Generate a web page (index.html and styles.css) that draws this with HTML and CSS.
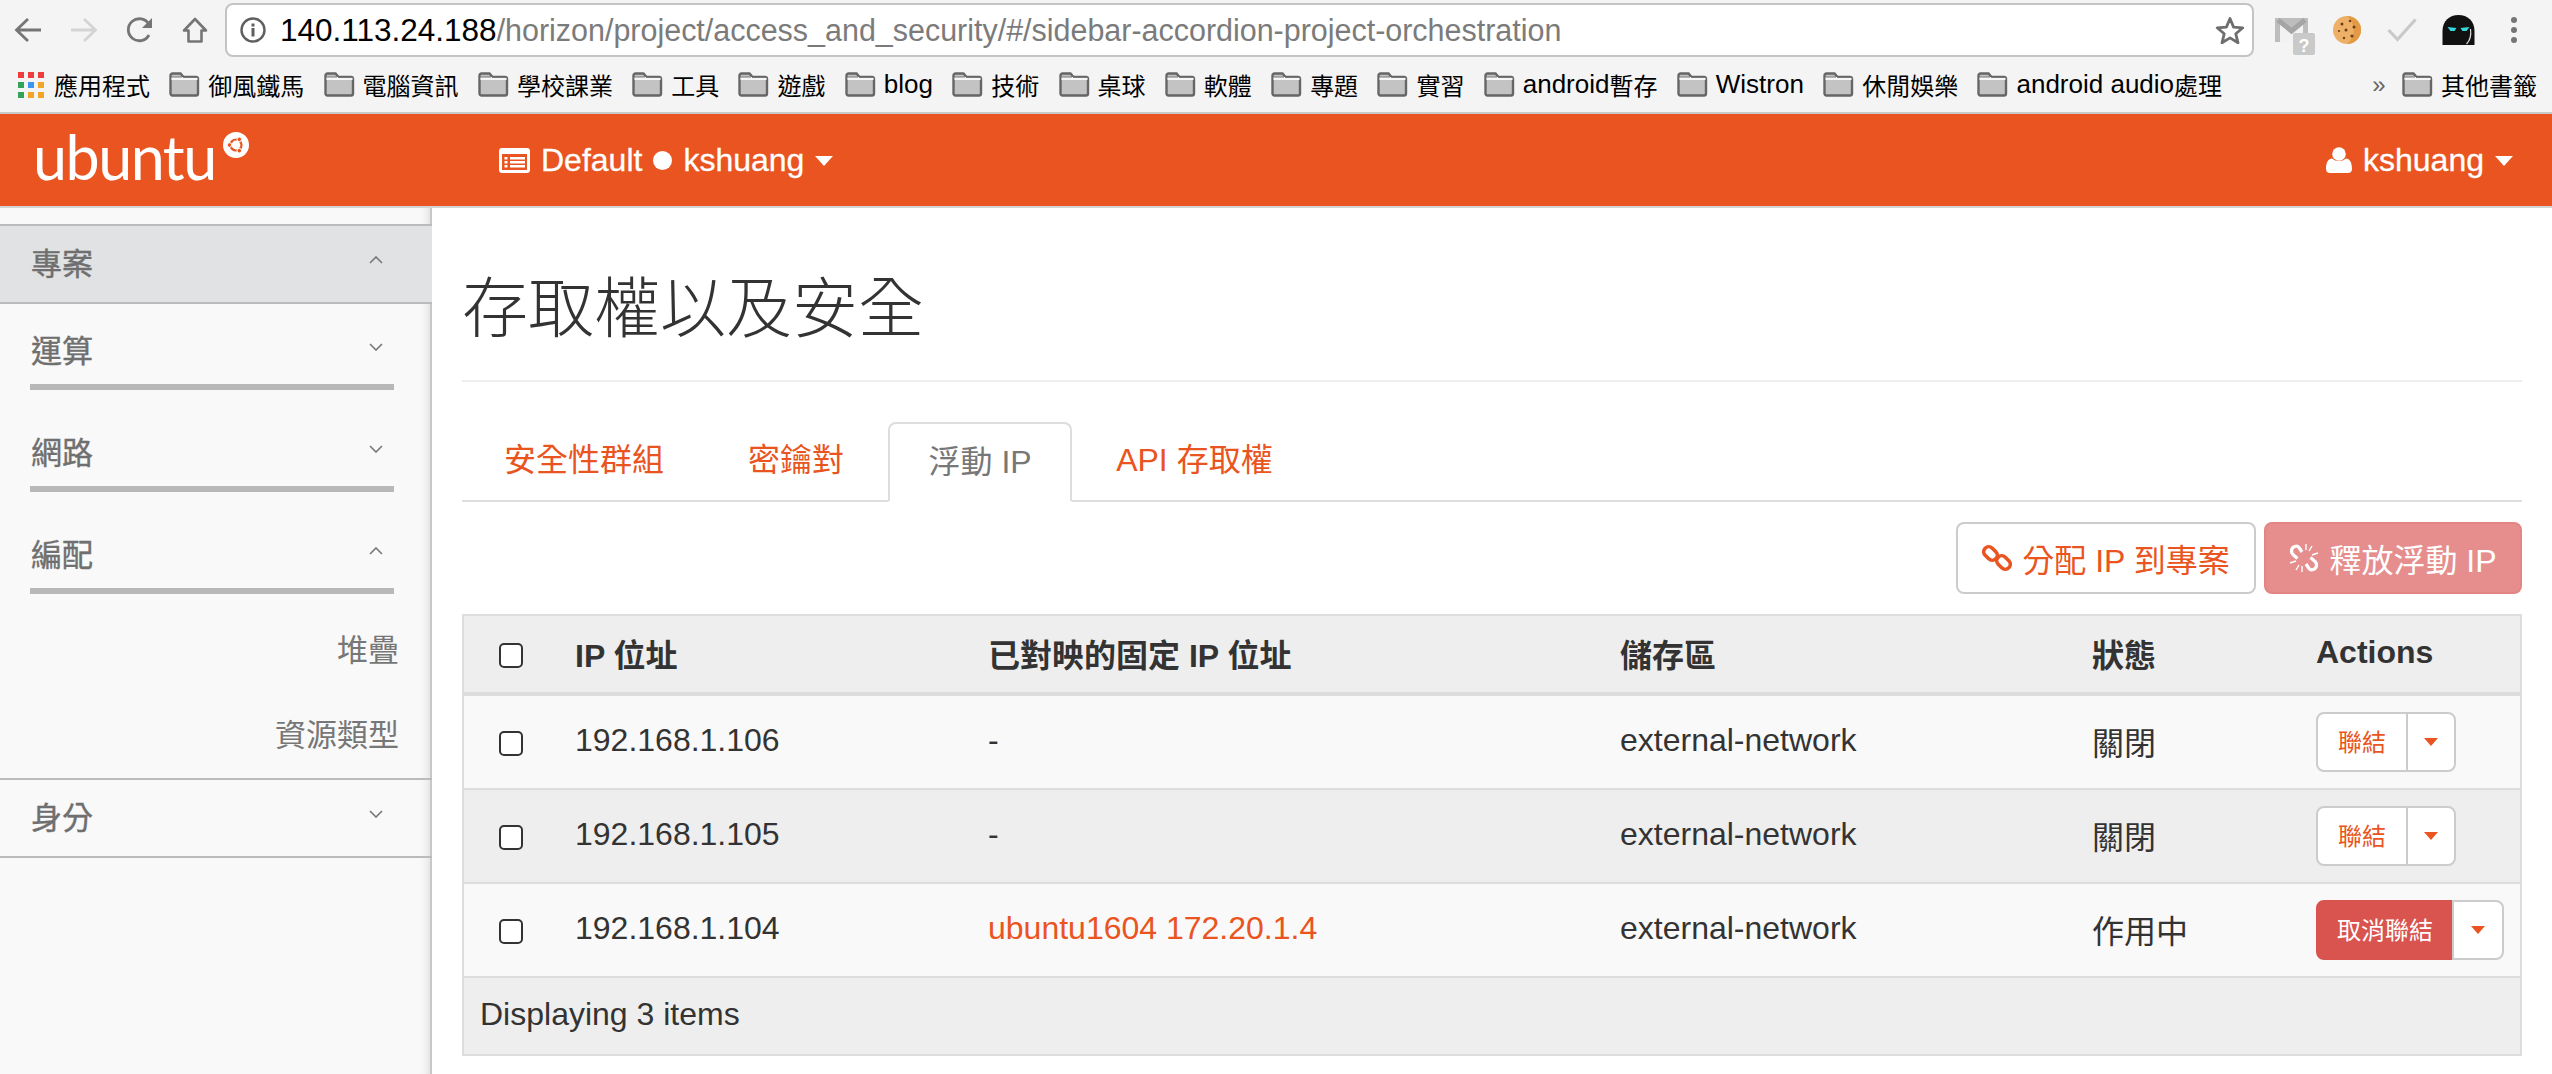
FILE: index.html
```html
<!DOCTYPE html>
<html lang="zh-Hant">
<head>
<meta charset="utf-8">
<title>存取權以及安全</title>
<link rel="stylesheet" href="styles.css">
</head>
<body>
<svg class="defs" width="0" height="0" aria-hidden="true">
  <symbol id="folder" viewBox="0 0 31 25">
    <path d="M1.5 3.5a2 2 0 0 1 2-2h8l3 3.5h12.500a2 2 0 0 1 2 2v14.500a2 2 0 0 1-2 2h-23.500a2 2 0 0 1-2-2z" fill="#c3c3c3" stroke="#666" stroke-width="2.400"/>
    <path d="M2.500 6.500h26" stroke="#f6f6f6" stroke-width="3"/>
    <path d="M2 5h11M14 5.500h15" stroke="#777" stroke-width="1.200" fill="none"/>
  </symbol>
  <symbol id="chev-down" viewBox="0 0 14 8"><path d="M1 1l6 6 6-6" fill="none" stroke="#777" stroke-width="1.600"/></symbol>
  <symbol id="chev-up" viewBox="0 0 14 8"><path d="M1 7l6-6 6 6" fill="none" stroke="#777" stroke-width="1.600"/></symbol>
</svg>

<header class="chrome">
  <div class="toolbar">
    <svg class="nav-icon" viewBox="0 0 28 26"><path d="M27 13H3M14 2L2.500 13 14 24" fill="none" stroke="#757575" stroke-width="2.800"/></svg>
    <svg class="nav-icon nav-gap" viewBox="0 0 28 26"><path d="M1 13h24M14 2l11.500 11L14 24" fill="none" stroke="#d4d4d4" stroke-width="2.800"/></svg>
    <svg class="nav-icon nav-gap" viewBox="0 0 28 26"><path d="M23 18a11 11 0 1 1 0-10.500" fill="none" stroke="#757575" stroke-width="2.800"/><path d="M26 1v10H16z" fill="#757575"/></svg>
    <svg class="nav-icon nav-gap home" viewBox="0 0 26 26"><path d="M13 2L2 13.500h4.500V24.500h13V13.500H24z" fill="none" stroke="#757575" stroke-width="2.600" stroke-linejoin="round"/></svg>
    <div class="omnibox">
      <svg class="info" viewBox="0 0 26 26"><circle cx="13" cy="13" r="11.500" fill="none" stroke="#5f5f5f" stroke-width="2.400"/><path d="M11.500 11h3v8.500h-3zM11.500 6.500h3v3h-3z" fill="#5f5f5f"/></svg>
      <div class="url"><span class="url-host">140.113.24.188</span>/horizon/project/access_and_security/#/sidebar-accordion-project-orchestration</div>
      <svg class="star" viewBox="0 0 30 28"><path d="M15 2.500l3.600 8.600 9.200.7-7 6 2.200 9-8-4.900-8 4.900 2.200-9-7-6 9.200-.7z" fill="none" stroke="#6e6e6e" stroke-width="2.800" stroke-linejoin="round"/></svg>
    </div>
    <div class="extensions">
      <svg class="ext-mail" viewBox="0 0 42 38">
        <path d="M0 0h33v24H0z" fill="#bdbdbd"/><path d="M5 5v19h23V5L16.500 15z" fill="#f2f2f2"/><path d="M3 2l13.500 11L30 2" fill="none" stroke="#a5a5a5" stroke-width="5"/>
        <path d="M18 17a2 2 0 0 1 2-2h18a2 2 0 0 1 2 2v18a2 2 0 0 1-2 2H20a2 2 0 0 1-2-2z" fill="#c9c9c9"/>
        <text class="ext-badge" x="29" y="34">?</text>
      </svg>
      <svg class="ext-cookie" viewBox="0 0 28 28"><circle cx="14" cy="14" r="14" fill="#eeb066"/><path d="M14 0a14 14 0 0 1 0 28 18 18 0 0 0 0-28z" fill="#e29a45"/><g fill="#6b3f18"><circle cx="9" cy="8" r="1.500"/><circle cx="17" cy="5" r="1.300"/><circle cx="21" cy="11" r="1.500"/><circle cx="13" cy="14" r="1.500"/><circle cx="6" cy="15" r="1.100"/><circle cx="19" cy="20" r="1.600"/><circle cx="11" cy="22" r="1.200"/></g></svg>
      <svg class="ext-check" viewBox="0 0 30 24"><path d="M1.500 12l9 9.500L28.500 1.500" fill="none" stroke="#c9c9c9" stroke-width="3.200"/></svg>
      <svg class="ext-ghost" viewBox="0 0 32 30"><path d="M0 30V16C0 6 7 0 16 0s16 6 16 16v14z" fill="#111"/><path d="M28 14c1 7 0 11-4 15" fill="none" stroke="#ddd" stroke-width="1.200"/><path d="M5 12l9 1-2 3H8zM27 12l-9 1 2 3h4z" fill="#35d8dd"/></svg>
      <svg class="ext-dots" viewBox="0 0 6 26"><g fill="#757575"><circle cx="3" cy="3" r="3"/><circle cx="3" cy="13" r="3"/><circle cx="3" cy="23" r="3"/></g></svg>
    </div>
  </div>
  <nav class="bookmarks">
    <a class="bm bm-apps">
      <span class="apps-grid">
        <i class="c-red"></i><i class="c-red"></i><i class="c-red"></i>
        <i class="c-green"></i><i class="c-blue"></i><i class="c-amber"></i>
        <i class="c-green"></i><i class="c-amber"></i><i class="c-amber"></i>
      </span>應用程式</a>
    <a class="bm"><svg class="folder"><use href="#folder"/></svg>御風鐵馬</a>
    <a class="bm"><svg class="folder"><use href="#folder"/></svg>電腦資訊</a>
    <a class="bm"><svg class="folder"><use href="#folder"/></svg>學校課業</a>
    <a class="bm"><svg class="folder"><use href="#folder"/></svg>工具</a>
    <a class="bm"><svg class="folder"><use href="#folder"/></svg>遊戲</a>
    <a class="bm"><svg class="folder"><use href="#folder"/></svg><span class="lat">blog</span></a>
    <a class="bm"><svg class="folder"><use href="#folder"/></svg>技術</a>
    <a class="bm"><svg class="folder"><use href="#folder"/></svg>桌球</a>
    <a class="bm"><svg class="folder"><use href="#folder"/></svg>軟體</a>
    <a class="bm"><svg class="folder"><use href="#folder"/></svg>專題</a>
    <a class="bm"><svg class="folder"><use href="#folder"/></svg>實習</a>
    <a class="bm"><svg class="folder"><use href="#folder"/></svg><span class="lat">android</span>暫存</a>
    <a class="bm"><svg class="folder"><use href="#folder"/></svg><span class="lat">Wistron</span></a>
    <a class="bm"><svg class="folder"><use href="#folder"/></svg>休閒娛樂</a>
    <a class="bm"><svg class="folder"><use href="#folder"/></svg><span class="lat">android audio</span>處理</a>
    <span class="bm-more">»</span>
    <a class="bm"><svg class="folder"><use href="#folder"/></svg>其他書籤</a>
  </nav>
</header>

<div class="topbar">
  <div class="brand">
    <span class="brand-word">ubuntu</span>
    <svg class="brand-mark" viewBox="0 0 26 26">
      <circle cx="13" cy="13" r="13" fill="#fff"/>
      <circle cx="13" cy="13" r="5.500" fill="none" stroke="#e95420" stroke-width="2.200"/>
      <g fill="#e95420" stroke="#fff" stroke-width="1"><circle cx="6.500" cy="13" r="2.300"/><circle cx="16.300" cy="7.300" r="2.300"/><circle cx="16.300" cy="18.700" r="2.300"/></g>
    </svg>
  </div>
  <div class="project-switch">
    <svg class="ico-list" viewBox="0 0 31 25"><rect width="31" height="25" rx="3" fill="#fff"/><path d="M3 6h25v16H3z" fill="#e95420"/><path d="M5.500 9h3v2.500h-3zM11 9h15v2.500H11zM5.500 13h3v2.500h-3zM11 13h15v2.500H11zM5.500 17h3v2.500h-3zM11 17h15v2.500H11z" fill="#fff"/></svg>
    <span>Default</span><span class="dot"></span><span>kshuang</span><span class="caret-w"></span>
  </div>
  <div class="user-menu">
    <svg class="ico-user" viewBox="0 0 26 26"><circle cx="13" cy="7" r="6.800" fill="#fff"/><path d="M0 22c0-7 2.500-10.500 6-10.500 2 1.700 4.300 2.500 7 2.500s5-.8 7-2.500c3.500 0 6 3.500 6 10.500 0 2.500-1.500 4-4 4H4c-2.500 0-4-1.500-4-4z" fill="#fff"/></svg>
    <span>kshuang</span><span class="caret-w"></span>
  </div>
</div>

<div class="layout">
  <aside class="sidebar">
    <div class="side-head side-head-open"><span>專案</span><svg class="chev"><use href="#chev-up"/></svg></div>
    <div class="side-group"><span>運算</span><svg class="chev"><use href="#chev-down"/></svg></div>
    <div class="side-group"><span>網路</span><svg class="chev"><use href="#chev-down"/></svg></div>
    <div class="side-group side-group-open"><span>編配</span><svg class="chev"><use href="#chev-up"/></svg></div>
    <ul class="side-sub">
      <li>堆疊</li>
      <li>資源類型</li>
    </ul>
    <div class="side-head"><span>身分</span><svg class="chev"><use href="#chev-down"/></svg></div>
  </aside>

  <main class="content">
    <h1 class="page-title">存取權以及安全</h1>
    <ul class="tabs">
      <li class="tab">安全性群組</li>
      <li class="tab">密鑰對</li>
      <li class="tab tab-active">浮動 IP</li>
      <li class="tab">API 存取權</li>
    </ul>
    <div class="actions">
      <button class="btn btn-alloc">
        <svg class="ico-btn" viewBox="0 0 30 30"><g fill="none" stroke="#e95420" stroke-width="3.600"><rect x="1" y="5.500" width="15" height="10" rx="5" transform="rotate(45 8.500 10.500)"/><rect x="14" y="14.500" width="15" height="10" rx="5" transform="rotate(45 21.500 19.500)"/></g></svg>
        分配 IP 到專案
      </button>
      <button class="btn btn-release">
        <svg class="ico-btn" viewBox="0 0 30 30"><g fill="none" stroke="#fff" stroke-width="3.200"><path d="M13 9l-3-4.500c-2-2.500-7-1-7.500 3-.2 2 .8 3.500 2 4.500l4 3.500"/><path d="M17 21l3 4.500c2 2.500 7 1 7.500-3 .2-2-.8-3.500-2-4.500l-4-3.500"/></g><path d="M17 1v6M23 3l-3 5M29 10l-6 2M1 20l6-2M7 27l3-5M13 29v-6" stroke="#fff" stroke-width="1.400"/></svg>
        釋放浮動 IP
      </button>
    </div>
    <table class="grid">
      <colgroup>
        <col class="col-check"><col class="col-ip"><col class="col-mapped"><col class="col-pool"><col class="col-state"><col class="col-act">
      </colgroup>
      <thead>
        <tr>
          <th class="cell-check"><input class="check" type="checkbox"></th>
          <th>IP 位址</th><th>已對映的固定 IP 位址</th><th>儲存區</th><th>狀態</th><th>Actions</th>
        </tr>
      </thead>
      <tbody>
        <tr class="row-odd">
          <td class="cell-check"><input class="check" type="checkbox"></td>
          <td>192.168.1.106</td><td>-</td><td>external-network</td><td>關閉</td>
          <td class="cell-act"><div class="btn-group"><span class="seg seg-main">聯結</span><span class="seg seg-drop"><i class="caret-o"></i></span></div></td>
        </tr>
        <tr class="row-even">
          <td class="cell-check"><input class="check" type="checkbox"></td>
          <td>192.168.1.105</td><td>-</td><td>external-network</td><td>關閉</td>
          <td class="cell-act"><div class="btn-group"><span class="seg seg-main">聯結</span><span class="seg seg-drop"><i class="caret-o"></i></span></div></td>
        </tr>
        <tr class="row-odd">
          <td class="cell-check"><input class="check" type="checkbox"></td>
          <td>192.168.1.104</td><td class="link">ubuntu1604 172.20.1.4</td><td>external-network</td><td>作用中</td>
          <td class="cell-act"><div class="btn-group"><span class="seg seg-danger">取消聯結</span><span class="seg seg-drop seg-drop-danger"><i class="caret-o"></i></span></div></td>
        </tr>
      </tbody>
      <tfoot>
        <tr><td class="foot" colspan="6">Displaying 3 items</td></tr>
      </tfoot>
    </table>
  </main>
</div>
</body>
</html>
```
FILE: styles.css
```css
* { box-sizing: border-box; }
html, body { margin: 0; padding: 0; height: 1074px; overflow: hidden; background: #fff; }
body { font-family: "Liberation Sans", "Noto Sans CJK TC", sans-serif; font-size: 32px; color: #333; display: flex; flex-direction: column; }
.defs { position: absolute; }
ul { list-style: none; margin: 0; padding: 0; }

/* browser chrome */
.chrome { background: #f4f4f4; height: 114px; border-bottom: 2px solid #c9c9c9; flex: none; }
.toolbar { height: 60px; display: flex; align-items: center; padding-left: 14px; }
.nav-icon { width: 28px; height: 26px; flex: none; }
.nav-gap { margin-left: 28px; }
.home { width: 26px; }
.omnibox { margin-left: 17px; width: 2029px; height: 54px; background: #fff; border: 2px solid #c4c4c4; border-radius: 8px; display: flex; align-items: center; padding: 0 7px 0 13px; }
.info { width: 26px; height: 26px; flex: none; }
.url { margin-left: 14px; flex: 1; font-size: 30.460px; color: #7b7b7b; white-space: nowrap; }
.url-host { color: #000; font-size: 31.500px; }
.star { width: 30px; height: 28px; flex: none; }
.extensions { display: flex; align-items: center; position: relative; }
.ext-mail { width: 42px; height: 38px; margin-left: 21px; margin-top: 14px; align-self: flex-start; }
.ext-badge { font-size: 18px; font-weight: 700; fill: #fff; text-anchor: middle; }
.ext-cookie { width: 28px; height: 28px; margin-left: 16px; }
.ext-check { width: 30px; height: 24px; margin-left: 26px; }
.ext-ghost { width: 33px; height: 30px; margin-left: 25px; }
.ext-dots { width: 8px; height: 26px; margin-left: 35px; }

.bookmarks { height: 52px; display: flex; align-items: center; padding: 0 15px 3px 18px; font-size: 24px; color: #000; gap: 19.300px; }
.bm { display: flex; align-items: center; white-space: nowrap; }
.lat { font-size: 26px; }
.folder { width: 31px; height: 25px; margin-right: 8px; flex: none; }
.apps-grid { display: grid; grid-template-columns: repeat(3, 6px); grid-auto-rows: 6px; gap: 4px; margin-right: 10px; }
.apps-grid i { display: block; }
.c-red { background: #ef3d3d; }
.c-green { background: #34a35a; }
.c-blue { background: #3c95f0; }
.c-amber { background: #f3a626; }
.bm-more { margin-left: auto; margin-right: -3px; color: #666; }

/* top bar */
.topbar { height: 94px; flex: none; background: #e95420; border-bottom: 2px solid #d4d4d4; display: flex; align-items: center; color: #fff; position: relative; -webkit-text-stroke: 0.3px #fff; }
.brand { width: 499px; padding-left: 33px; display: flex; align-items: flex-start; -webkit-text-stroke: 0; }
.brand-word { font-family: "Lato", sans-serif; font-weight: 400; font-size: 61px; letter-spacing: -1.500px; line-height: 66px; margin-top: -6px; }
.brand-mark { width: 26px; height: 26px; margin-left: 7px; margin-top: 2px; }
.project-switch, .user-menu { display: flex; align-items: center; }
.ico-list { width: 31px; height: 25px; margin-right: 11px; }
.dot { width: 19px; height: 19px; border-radius: 50%; background: #fff; margin: 0 11px; }
.caret-w { width: 0; height: 0; border-left: 9px solid transparent; border-right: 9px solid transparent; border-top: 10px solid #fff; margin-left: 11px; margin-top: 2px; }
.user-menu { margin-left: auto; margin-right: 39px; }
.ico-user { width: 26px; height: 26px; margin-right: 11px; }

/* layout */
.layout { flex: 1; display: flex; min-height: 0; }
.sidebar { width: 432px; flex: none; background: #f9f9f9; border-right: 2px solid #c8c8c8; box-shadow: inset -10px 0 8px -8px #ddd; padding-top: 16px; color: #6f6f6f; font-size: 31px; }
.side-head { height: 80px; border-top: 2px solid #bbb; border-bottom: 2px solid #bbb; margin-right: -2px; display: flex; align-items: center; justify-content: space-between; padding: 0 49px 5px 31px; -webkit-text-stroke: 0.4px #6f6f6f; }
.side-head-open { background: #e1e2e4; }
.chev { width: 14px; height: 8px; margin-bottom: 4px; flex: none; }
.side-group { height: 86px; margin: 0 36px 16px 30px; border-bottom: 6px solid #b8b8b8; display: flex; align-items: center; justify-content: space-between; padding: 9px 11px 0 1px; -webkit-text-stroke: 0.4px #6f6f6f; }
.side-group-open { margin-bottom: 0; }
.side-sub { padding-top: 14px; text-align: right; padding-right: 31px; color: #777; }
.side-sub li { height: 85px; line-height: 85px; }

/* content */
.content { flex: 1; padding: 0 30px; min-width: 0; }
.page-title { margin: 0; padding: 61px 0 31px; border-bottom: 2px solid #eee; font-size: 66px; line-height: 80px; font-weight: 300; color: #333; }
.tabs { display: flex; margin-top: 40px; height: 80px; border-bottom: 2px solid #ddd; padding-left: 2px; gap: 4px; color: #e95420; }
.tab { padding: 0 40px; height: 80px; line-height: 76px; }
.tab-active { color: #777; background: #fff; border: 2px solid #ddd; border-bottom-color: #fff; border-radius: 8px 8px 0 0; padding: 0 38.500px; }
.actions { display: flex; justify-content: flex-end; gap: 8px; margin-top: 20px; }
.btn { height: 72px; border-radius: 8px; font: inherit; padding: 0; display: flex; align-items: center; justify-content: center; gap: 10px; }
.btn-alloc { width: 300px; background: #fff; border: 2px solid #ccc; color: #e95420; }
.btn-release { width: 258px; background: #e58e8d; border: 2px solid #e38584; color: #fff; }
.ico-btn { width: 30px; height: 30px; flex: none; }

/* table */
.grid { width: 100%; margin-top: 20px; table-layout: fixed; border-collapse: separate; border-spacing: 0; border: 2px solid #ddd; }
.col-check { width: 89px; } .col-ip { width: 413px; } .col-mapped { width: 632px; } .col-pool { width: 472px; } .col-state { width: 224px; } .col-act { width: 226px; }
.grid th, .grid td { padding: 0 22px 3px; text-align: left; vertical-align: middle; }
.grid th { height: 80px; background: #eee; border-bottom: 4px solid #ddd; font-weight: 700; }
.grid td { height: 94px; border-bottom: 2px solid #ddd; }
.grid .cell-check { padding: 0 0 0 35px; }
.grid .cell-act { padding: 0 0 0 22px; }
.row-odd td { background: #f9f9f9; }
.row-even td { background: #eee; }
.grid .foot { height: 76px; background: #eee; border-bottom: 0; padding-left: 16px; }
.link { color: #e95420; }
.check { appearance: none; display: block; width: 24px; height: 25px; margin: 3px 0 0; border: 2px solid #333; border-radius: 5px; background: #fff; }
.btn-group { display: flex; height: 60px; font-size: 24px; }
.seg { display: flex; flex: none; align-items: center; justify-content: center; background: #fff; border: 2px solid #ccc; padding-bottom: 4px; }
.seg-main { width: 92px; color: #e95420; border-radius: 8px 0 0 8px; }
.seg-danger { width: 138px; background: #d9534f; border-color: #d9534f; color: #fff; border-radius: 8px 0 0 8px; }
.seg-drop { width: 50px; margin-left: -2px; border-radius: 0 8px 8px 0; padding-bottom: 0; }
.seg-drop-danger { width: 52px; }
.caret-o { width: 0; height: 0; border-left: 7px solid transparent; border-right: 7px solid transparent; border-top: 8px solid #e95420; }
```
